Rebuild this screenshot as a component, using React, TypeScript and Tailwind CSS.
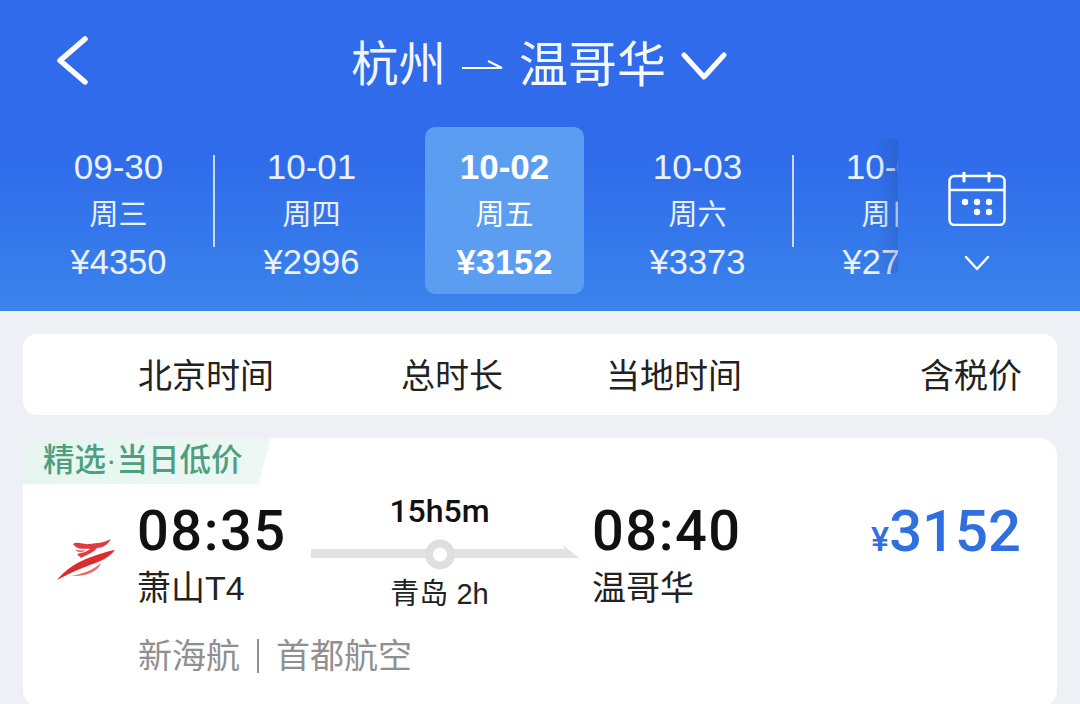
const sans = "font-['Liberation_Sans','Noto_Sans_CJK_SC',sans-serif]";
const medium = "font-['Roboto','Noto_Sans_CJK_SC',sans-serif]";

const dates = [
  { d: '09-30', w: '周三', p: '¥4350', line: true },
  { d: '10-01', w: '周四', p: '¥2996', line: false },
  { d: '10-02', w: '周五', p: '¥3152', active: true, line: false },
  { d: '10-03', w: '周六', p: '¥3373', line: true },
  { d: '10-04', w: '周日', p: '¥2788', line: false },
];

function Logo() {
  return (
    <svg width="60" height="44" viewBox="0 0 60 44" className="shrink-0">
      <path d="M0 42 C9 31 20 24 34 19 C40 17 50 13 58 12 C52 20 42 24 33 27 C22 31 11 36 0 42Z" fill="#dd2c2c" />
      <path d="M14 38 C26 36 36 32 44 25 C41 33 30 39 14 38Z" fill="#e8686a" />
      <path d="M16 6 C21 3 27 7 32 6 C40 5 47 5 54 1 C51 7 45 10 40 10 C37 14 30 17 24 20 L20 16 C26 15 31 13 33 11 C28 10 21 13 16 6Z" fill="#e03c3f" />
      <path d="M18 12 C22 12 25 13 28 12 C26 15 22 15 18 12Z" fill="#e8686a" />
    </svg>
  );
}

function Calendar() {
  return (
    <svg width="58" height="54" viewBox="0 0 58 54" fill="none" stroke="white" strokeWidth="2.5">
      <rect x="1.5" y="4" width="55" height="49" rx="5" />
      <path d="M1.5 18H56.5" />
      <path d="M16 0.5V9M41 0.5V9" strokeLinecap="round" strokeWidth="3" />
      <g fill="white" stroke="none">
        <circle cx="17" cy="30" r="3.2" /><circle cx="29" cy="30" r="3.2" /><circle cx="41" cy="30" r="3.2" />
        <circle cx="29" cy="40" r="3.2" /><circle cx="41" cy="40" r="3.2" />
      </g>
    </svg>
  );
}

function RouteLine() {
  return (
    <svg width="268" height="32" viewBox="0 0 268 32" className="block">
      <path d="M0 10H254L252 6L268 19H0Z" fill="#e2e2e2" />
      <circle cx="129" cy="15.5" r="11" fill="white" stroke="#dfdfdf" strokeWidth="8" />
    </svg>
  );
}

export default function App() {
  return (
    <div className={`${sans} h-[704px] w-[1080px] overflow-hidden bg-[#eef0f5]`}>
      <header className="h-[311px] bg-gradient-to-b from-[#2f6bea] from-50% to-[#3b83ec] text-white">
        <div className="flex h-[127px] items-start pl-[55px] pt-[36px]">
          <svg width="34" height="50" viewBox="0 0 34 50" fill="none" stroke="white" strokeWidth="5.5" strokeLinecap="round" strokeLinejoin="round" className="shrink-0">
            <path d="M30 3 L5 24.5 L30 46" />
          </svg>
          <div className="ml-[262px] flex h-[58px] items-center">
            <span className="text-[47.5px] leading-none text-white/95">杭州</span>
            <svg width="44" height="14" viewBox="0 0 44 14" fill="none" stroke="white" strokeWidth="2" className="ml-[15px] mr-[14px] mt-[2px]">
              <path d="M1 9H41L27 2" />
            </svg>
            <span className="text-[49px] leading-none text-white/95">温哥华</span>
            <svg width="46" height="30" viewBox="0 0 46 30" fill="none" stroke="white" strokeWidth="5" strokeLinecap="round" strokeLinejoin="round" className="ml-[15px] mt-[2px]">
              <path d="M3 4 L23 26 L43 4" />
            </svg>
          </div>
        </div>
        <div className="flex h-[167px]">
          <div className="relative flex w-[898px] shrink-0 overflow-hidden pl-[22px]">
            {dates.map((x) => (
              <div key={x.d} className="relative flex w-[193px] shrink-0 justify-center">
                <div className={`flex h-[167px] w-[159px] flex-col items-center rounded-[10px] pt-[20px] ${x.active ? 'bg-[#5b9df0] font-bold' : 'text-white/90'}`}>
                  <span className="h-[40px] text-[35px] leading-[40px]">{x.d}</span>
                  <span className="mt-[8px] h-[40px] text-[29px] font-normal leading-[40px]">{x.w}</span>
                  <span className="mt-[7px] h-[40px] whitespace-nowrap text-[34.5px] leading-[40px]">{x.p}</span>
                </div>
                {x.line && <div className="absolute right-0 top-[28px] h-[92px] w-[2.5px] bg-white/75" />}
              </div>
            ))}
            <div className="absolute right-0 top-[12px] h-[134px] w-[22px] bg-gradient-to-r from-transparent to-[#264f9f]/30" />
          </div>
          <div className="flex flex-1 flex-col items-center pr-[24px] pt-[45px]">
            <Calendar />
            <svg width="26" height="18" viewBox="0 0 26 18" fill="none" stroke="white" strokeWidth="2.5" strokeLinecap="round" strokeLinejoin="round" className="mt-[28px]">
              <path d="M2 3 L13 15 L24 3" />
            </svg>
          </div>
        </div>
      </header>

      <main className="flex flex-col gap-[23px] px-[23px] pt-[23px]">
        <div className="relative flex h-[81px] items-center rounded-[14px] bg-white pt-[3px] text-[34px] text-[#222]">
          <span className="ml-[115px] w-[136px] whitespace-nowrap">北京时间</span>
          <span className="ml-[127px] w-[102px] whitespace-nowrap">总时长</span>
          <span className="ml-[103px] w-[136px] whitespace-nowrap">当地时间</span>
          <span className="ml-auto mr-[35px] whitespace-nowrap">含税价</span>
        </div>

        <div className="h-[270px] shrink-0 overflow-hidden rounded-[18px] bg-white">
          <div className="flex h-[46px] w-[248px] items-center bg-gradient-to-r from-[#e6f5ef] to-[#edf8f4] pl-[20px] text-[31.5px] font-medium leading-none text-[#4f9f7f] [clip-path:polygon(0_0,100%_0,95%_100%,0_100%)]">
            <span className="whitespace-nowrap">精选·当日低价</span>
          </div>
          <div className="flex">
            <div className="ml-[34px] mt-[54px] w-[80px]">
              <Logo />
            </div>
            <div className="w-[174px]">
              <div className={`${medium} mt-[17px] h-[60px] text-[56px] font-medium leading-[60px] tracking-[1.5px] text-[#111]`}>08:35</div>
              <div className="mt-[7px] whitespace-nowrap text-[34px] leading-[40px] text-[#222]">萧山T4</div>
            </div>
            <div className="flex w-[281px] flex-col items-center pr-[24px]">
              <div className={`${medium} mt-[7px] h-[40px] text-[32px] font-medium leading-[40px] text-[#111]`}>15h5m</div>
              <div className="ml-[10px] mt-[8px]"><RouteLine /></div>
              <div className="mt-[3px] h-[40px] whitespace-nowrap text-[29px] leading-[40px] text-[#222]">青岛 2h</div>
            </div>
            <div className="w-[200px]">
              <div className={`${medium} mt-[17px] h-[60px] text-[56px] font-medium leading-[60px] tracking-[1.5px] text-[#111]`}>08:40</div>
              <div className="mt-[7px] whitespace-nowrap text-[34px] leading-[40px] text-[#222]">温哥华</div>
            </div>
            <div className={`${medium} mr-[36px] mt-[17px] flex h-[60px] flex-1 items-baseline justify-end text-[#2f6fdf]`}>
              <span className="text-[34px] font-medium leading-[60px]">¥</span>
              <span className="text-[58px] font-medium leading-[60px]">3152</span>
            </div>
          </div>
          <div className="ml-[115px] mt-[22px] flex items-center whitespace-nowrap text-[34px] leading-[40px] text-[#909090]">
            <span>新海航</span>
            <span className="ml-[17px] mr-[17px] h-[34px] w-[2px] bg-[#909090]" />
            <span>首都航空</span>
          </div>
        </div>
      </main>
    </div>
  );
}
